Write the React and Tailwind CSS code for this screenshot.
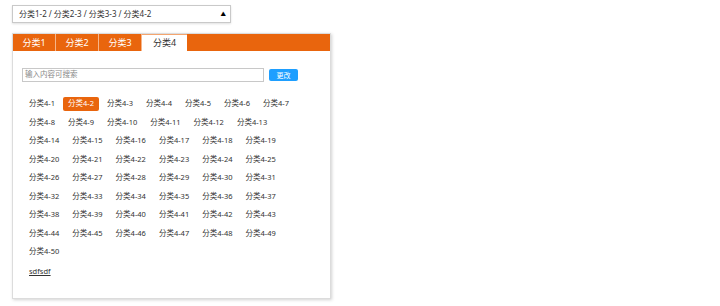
const TABS = ['分类1', '分类2', '分类3', '分类4']
const ITEMS = Array.from({ length: 50 }, (_, i) => `分类4-${i + 1}`)

export default function App() {
  const active = 3
  const selected = '分类4-2'

  return (
    <div
      className="w-[720px] h-[306px] bg-white pl-[12px] pt-[5px] text-[#333]"
      style={{ fontFamily: '"Noto Sans", "Noto Sans CJK SC", sans-serif' }}
    >
      {/* Selected path */}
      <div className="w-[219px] h-[18px] border border-[#c9c9c9] shadow-[0_1px_2px_rgba(0,0,0,0.12)] flex items-center pl-[6px] pr-[4px] text-[8px]">
        <span className="flex-1">分类1-2 / 分类2-3 / 分类3-3 / 分类4-2</span>
        <span className="text-[5.5px] text-black">▲</span>
      </div>

      {/* Panel */}
      <div className="mt-[10px] w-[319px] h-[266px] border border-[#dcdcdc] shadow-[1px_1px_3px_rgba(0,0,0,0.18)] bg-white">
        <div className="flex h-[17px] bg-[#e9650d]">
          {TABS.map((t, i) => (
            <div
              key={t}
              className={`h-full flex items-center justify-center text-[9px] border-r border-[#f6b58a] ${
                i === active
                  ? 'w-[45px] bg-white text-[#333] border-t border-t-[#f4a56f] border-r-0'
                  : 'w-[43px] text-white'
              } ${i === 0 ? 'w-[42px]' : ''}`}
            >
              {t}
            </div>
          ))}
        </div>

        <div className="pl-[9px] pt-[17px]">
          <div className="flex items-center gap-[5px]">
            <div className="w-[242px] h-[14px] border border-[#c8c8c8] flex items-center pl-[2px] text-[7.5px] text-[#888]">
              输入内容可搜索
            </div>
            <button className="w-[29px] h-[12px] rounded-[2px] bg-[#1e9fff] text-white text-[7px] leading-none">
              更改
            </button>
          </div>

          <div className="ml-[2px] mt-[15px] w-[284px] flex flex-wrap gap-x-[3px] gap-y-[4.5px]">
            {ITEMS.map((it) => (
              <span
                key={it}
                className={`h-[14px] px-[5px] flex items-center text-[7.5px] rounded-[2px] ${
                  it === selected ? 'bg-[#e9650d] text-white' : 'text-[#333]'
                }`}
              >
                {it}
              </span>
            ))}
          </div>

          <a className="block ml-[7px] mt-[7px] text-[7.5px] text-[#333] underline">sdfsdf</a>
        </div>
      </div>
    </div>
  )
}
